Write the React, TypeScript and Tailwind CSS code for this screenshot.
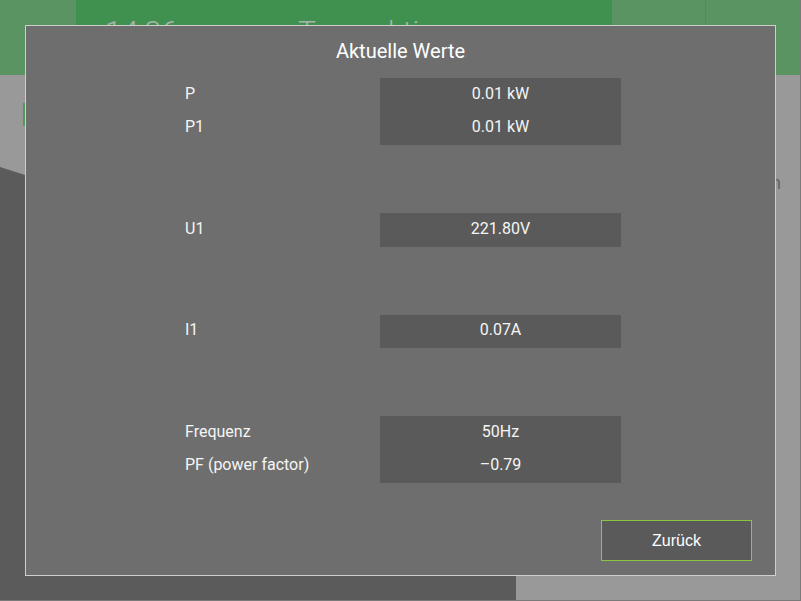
const groups: { label: string; value: string }[][] = [
  [
    { label: "P", value: "0.01 kW" },
    { label: "P1", value: "0.01 kW" },
  ],
  [{ label: "U1", value: "221.80V" }],
  [{ label: "I1", value: "0.07A" }],
  [
    { label: "Frequenz", value: "50Hz" },
    { label: "PF (power factor)", value: "\u20130.79" },
  ],
];

function Group({ rows }: { rows: { label: string; value: string }[] }) {
  return (
    <div className="flex ml-[159px]">
      <div className="w-[195px] flex flex-col">
        {rows.map((r) => (
          <div key={r.label} className="h-[33.5px] flex items-center pb-[2px]">
            {r.label}
          </div>
        ))}
      </div>
      <div className="w-[241px] bg-[#5a5a5a] flex flex-col">
        {rows.map((r) => (
          <div key={r.label} className="h-[33.5px] flex items-center justify-center pb-[2px]">
            {r.value}
          </div>
        ))}
      </div>
    </div>
  );
}

export default function App() {
  return (
    <div className="relative w-[801px] h-[601px] overflow-hidden bg-[#999999] border-r border-b border-[#7a7a7a] font-['Roboto',sans-serif]">
      {/* page behind the dialog */}
      <div className="h-[75px] flex">
        <div className="w-[76px] bg-[#5a9462]" />
        <div className="w-[536px] bg-[#40914f] flex items-start gap-[120px] pl-[29px] pt-[16px] text-[30px] font-light text-[#a9b3ab]">
          <div className="h-[9px] overflow-hidden leading-[36px] -mt-[0px]">
            <span className="block -mt-[2px]">14:36</span>
          </div>
          <div className="h-[9px] overflow-hidden leading-[36px]">
            <span className="block -mt-[2px]">Transaktionen</span>
          </div>
        </div>
        <div className="w-[94px] bg-[#5a9462] border-r border-[#4f8d5b]" />
        <div className="flex-1 bg-[#5a9462]" />
      </div>
      <div className="flex h-[525px]">
        <div className="w-[516px] flex flex-col">
          <div className="h-[92px] pt-[28px] pl-[23px]">
            <div className="w-[60px] h-[23px] border-l-2 border-[#4f9a5a]" />
          </div>
          <div className="flex-1 bg-[#5b5b5b] [clip-path:polygon(0_0,100%_165px,100%_100%,0_100%)]" />
        </div>
        <div className="flex-1 flex flex-col items-end pt-[96px] pr-[19px] text-[18px] leading-[24px] text-[#5e6670]">
          <span>Einstellungen</span>
        </div>
      </div>

      {/* dialog overlay */}
      <div className="absolute left-[25px] top-[25px] w-[751px] h-[551px] bg-[#6e6e6e] border border-[#cfcfcf] flex flex-col text-[16px] text-[#f5f5f5]">
        <div className="pt-[12px] h-[37px] text-center text-[20px] leading-[26px] text-white">
          Aktuelle Werte
        </div>
        <div className="mt-[15px] flex flex-col gap-[68px]">
          {groups.map((g, i) => (
            <Group key={i} rows={g} />
          ))}
        </div>
        <div className="mt-auto mb-[14px] mr-[23px] self-end w-[151px] h-[41px] bg-[#5a5a5a] border border-[#8cc63f] flex items-center justify-center text-[16px] text-white font-['Liberation_Sans',sans-serif]">
          Zurück
        </div>
      </div>
    </div>
  );
}
